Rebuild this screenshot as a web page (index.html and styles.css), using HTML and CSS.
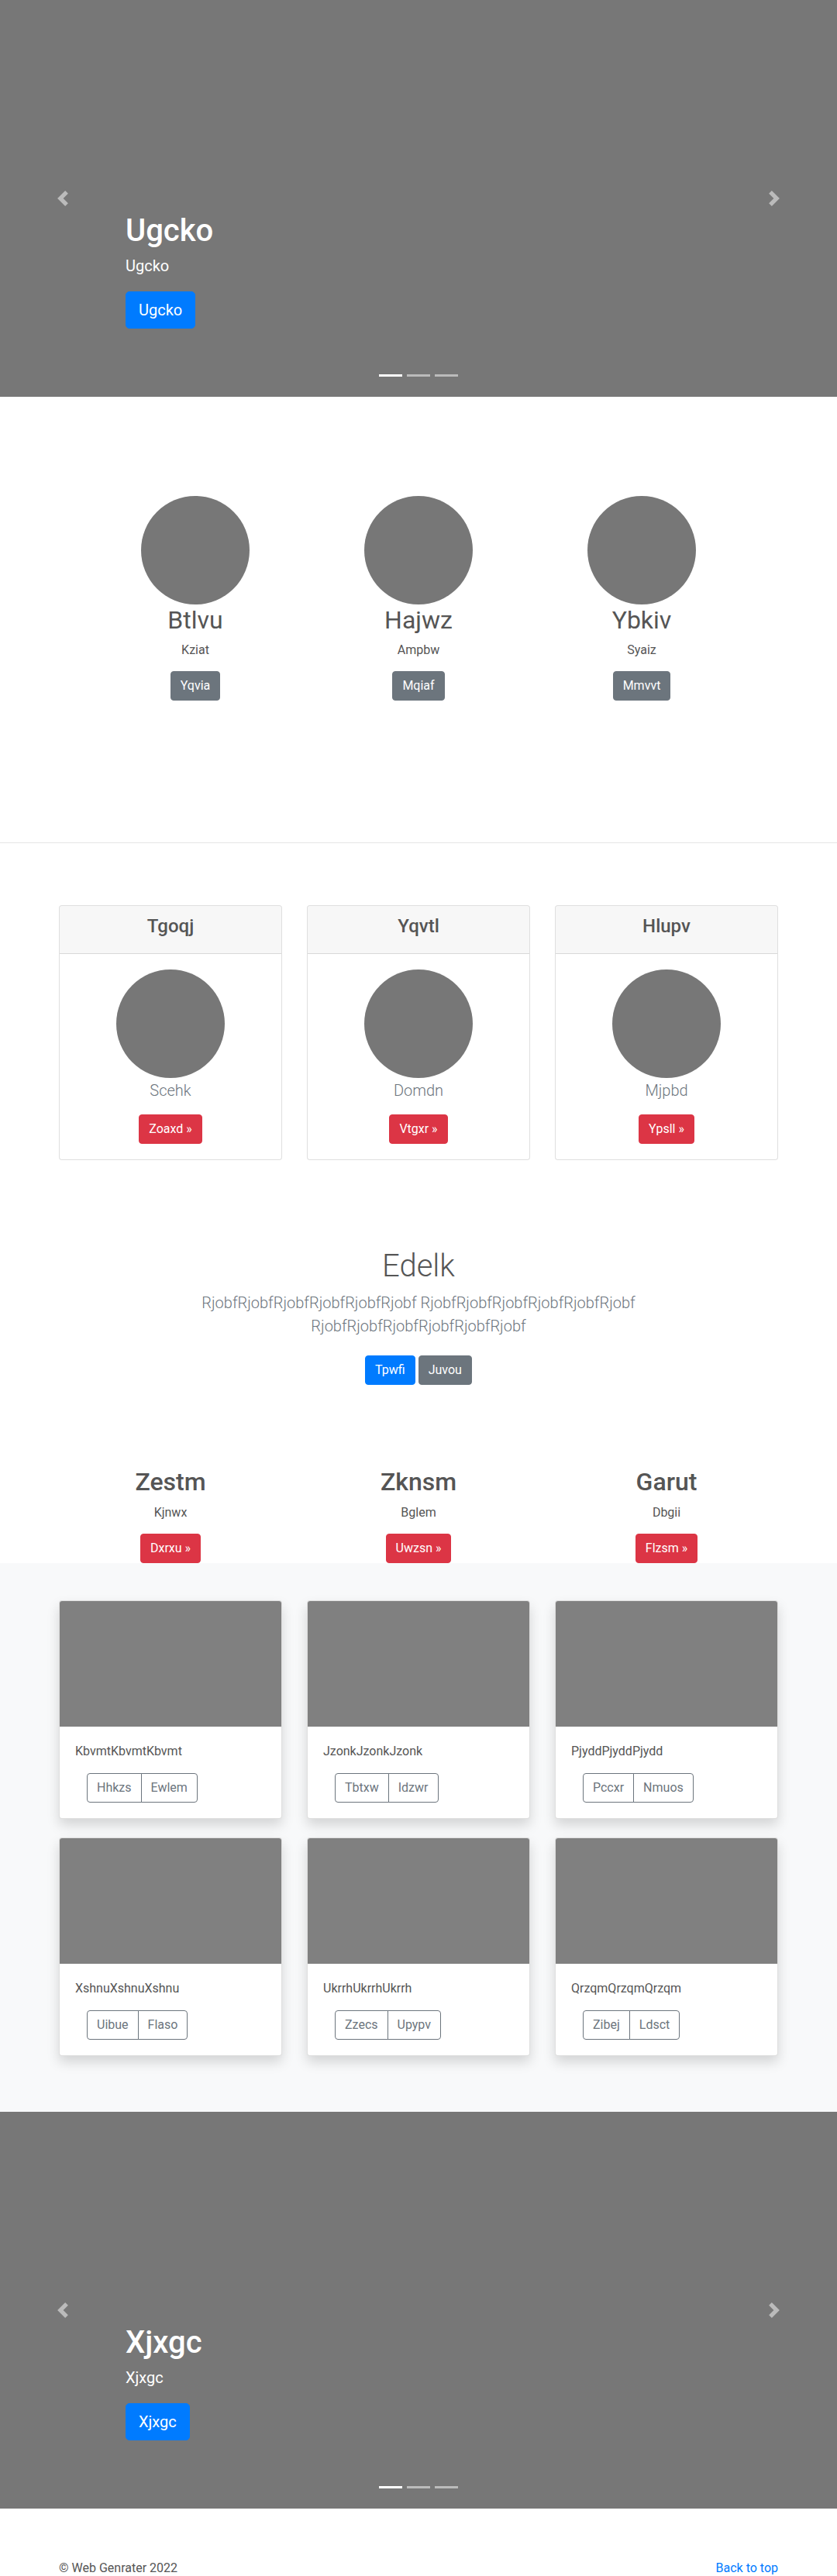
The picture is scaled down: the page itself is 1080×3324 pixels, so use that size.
FILE: index.html
```html
<!DOCTYPE html>
<html lang="en">
<head>
<meta charset="utf-8">
<title>Web Genrater</title>
<link rel="stylesheet" href="styles.css">
</head>
<body>

<div class="carousel">
  <div class="carousel-caption">
    <h1>Ugcko</h1>
    <p class="sub">Ugcko</p>
    <p class="cta"><a class="btn btn-lg btn-primary" href="#">Ugcko</a></p>
  </div>
  <ol class="carousel-indicators"><li class="active"></li><li></li><li></li></ol>
  <a class="carousel-control prev" href="#"><svg viewBox="0 0 8 8" fill="#fff"><path d="M5.25 0l-4 4 4 4 1.5-1.5L4.25 4l2.5-2.5L5.25 0z"/></svg></a>
  <a class="carousel-control next" href="#"><svg viewBox="0 0 8 8" fill="#fff"><path d="M2.75 0l-1.5 1.5L3.75 4l-2.5 2.5L2.75 8l4-4-4-4z"/></svg></a>
</div>

<section class="marketing">
  <div class="marketing-row">
    <div class="mk-col">
      <div class="circle"></div>
      <h2>Btlvu</h2>
      <p>Kziat</p>
      <a class="btn btn-secondary" href="#">Yqvia</a>
    </div>
    <div class="mk-col">
      <div class="circle"></div>
      <h2>Hajwz</h2>
      <p>Ampbw</p>
      <a class="btn btn-secondary" href="#">Mqiaf</a>
    </div>
    <div class="mk-col">
      <div class="circle"></div>
      <h2>Ybkiv</h2>
      <p>Syaiz</p>
      <a class="btn btn-secondary" href="#">Mmvvt</a>
    </div>
  </div>
</section>

<section class="pricing">
  <div class="grid3">
    <div class="pcard">
      <div class="pcard-header"><h4>Tgoqj</h4></div>
      <div class="pcard-body">
        <div class="circle"></div>
        <p class="lead-muted">Scehk</p>
        <a class="btn btn-danger" href="#">Zoaxd &raquo;</a>
      </div>
    </div>
    <div class="pcard">
      <div class="pcard-header"><h4>Yqvtl</h4></div>
      <div class="pcard-body">
        <div class="circle"></div>
        <p class="lead-muted">Domdn</p>
        <a class="btn btn-danger" href="#">Vtgxr &raquo;</a>
      </div>
    </div>
    <div class="pcard">
      <div class="pcard-header"><h4>Hlupv</h4></div>
      <div class="pcard-body">
        <div class="circle"></div>
        <p class="lead-muted">Mjpbd</p>
        <a class="btn btn-danger" href="#">Ypsll &raquo;</a>
      </div>
    </div>
  </div>
</section>

<section class="jumbo">
  <div class="jumbo-inner">
    <h1>Edelk</h1>
    <p class="lead">RjobfRjobfRjobfRjobfRjobfRjobf RjobfRjobfRjobfRjobfRjobfRjobf RjobfRjobfRjobfRjobfRjobfRjobf</p>
    <div class="actions">
      <a class="btn btn-primary" href="#">Tpwfi</a>
      <a class="btn btn-secondary" href="#">Juvou</a>
    </div>
  </div>
</section>

<section class="features">
  <div class="grid3">
    <div class="ft-col">
      <h2>Zestm</h2>
      <p>Kjnwx</p>
      <a class="btn btn-danger" href="#">Dxrxu &raquo;</a>
    </div>
    <div class="ft-col">
      <h2>Zknsm</h2>
      <p>Bglem</p>
      <a class="btn btn-danger" href="#">Uwzsn &raquo;</a>
    </div>
    <div class="ft-col">
      <h2>Garut</h2>
      <p>Dbgii</p>
      <a class="btn btn-danger" href="#">Flzsm &raquo;</a>
    </div>
  </div>
</section>

<section class="album">
  <div class="grid3">
    <div class="acard">
      <div class="acard-img"></div>
      <div class="acard-body">
        <p>KbvmtKbvmtKbvmt</p>
        <div class="btn-group"><a class="btn btn-outline" href="#">Hhkzs</a><a class="btn btn-outline" href="#">Ewlem</a></div>
      </div>
    </div>
    <div class="acard">
      <div class="acard-img"></div>
      <div class="acard-body">
        <p>JzonkJzonkJzonk</p>
        <div class="btn-group"><a class="btn btn-outline" href="#">Tbtxw</a><a class="btn btn-outline" href="#">Idzwr</a></div>
      </div>
    </div>
    <div class="acard">
      <div class="acard-img"></div>
      <div class="acard-body">
        <p>PjyddPjyddPjydd</p>
        <div class="btn-group"><a class="btn btn-outline" href="#">Pccxr</a><a class="btn btn-outline" href="#">Nmuos</a></div>
      </div>
    </div>
    <div class="acard">
      <div class="acard-img"></div>
      <div class="acard-body">
        <p>XshnuXshnuXshnu</p>
        <div class="btn-group"><a class="btn btn-outline" href="#">Uibue</a><a class="btn btn-outline" href="#">Flaso</a></div>
      </div>
    </div>
    <div class="acard">
      <div class="acard-img"></div>
      <div class="acard-body">
        <p>UkrrhUkrrhUkrrh</p>
        <div class="btn-group"><a class="btn btn-outline" href="#">Zzecs</a><a class="btn btn-outline" href="#">Upypv</a></div>
      </div>
    </div>
    <div class="acard">
      <div class="acard-img"></div>
      <div class="acard-body">
        <p>QrzqmQrzqmQrzqm</p>
        <div class="btn-group"><a class="btn btn-outline" href="#">Zibej</a><a class="btn btn-outline" href="#">Ldsct</a></div>
      </div>
    </div>
  </div>
</section>

<div class="carousel">
  <div class="carousel-caption">
    <h1>Xjxgc</h1>
    <p class="sub">Xjxgc</p>
    <p class="cta"><a class="btn btn-lg btn-primary" href="#">Xjxgc</a></p>
  </div>
  <ol class="carousel-indicators"><li class="active"></li><li></li><li></li></ol>
  <a class="carousel-control prev" href="#"><svg viewBox="0 0 8 8" fill="#fff"><path d="M5.25 0l-4 4 4 4 1.5-1.5L4.25 4l2.5-2.5L5.25 0z"/></svg></a>
  <a class="carousel-control next" href="#"><svg viewBox="0 0 8 8" fill="#fff"><path d="M2.75 0l-1.5 1.5L3.75 4l-2.5 2.5L2.75 8l4-4-4-4z"/></svg></a>
</div>

<footer class="footer">
  <p>&copy; Web Genrater 2022</p>
  <p><a href="#">Back to top</a></p>
</footer>

</body>
</html>
```

FILE: styles.css
```css
* { box-sizing: border-box; }

body {
  margin: 0;
  font-family: Roboto, "Liberation Sans", Arial, sans-serif;
  font-size: 16px;
  line-height: 1.5;
  color: #555;
  background: #fff;
}

h1, h2, h4, p { margin: 0; }
a { text-decoration: none; }

/* buttons */
.btn {
  display: inline-block;
  font-size: 16px;
  line-height: 24px;
  padding: 6px 12px;
  border: 1px solid transparent;
  border-radius: 4px;
  color: #fff;
  font-weight: 400;
}
.btn-lg { font-size: 20px; line-height: 30px; padding: 8px 16px; border-radius: 5px; }
.btn-primary { background: #007bff; border-color: #007bff; }
.btn-secondary { background: #6c757d; border-color: #6c757d; }
.btn-danger { background: #dc3545; border-color: #dc3545; }
.btn-outline { color: #6c757d; border-color: #6c757d; background: transparent; }

/* carousel */
.carousel {
  position: relative;
  height: 512px;
  background: #777;
  overflow: hidden;
}
.carousel-caption {
  position: absolute;
  left: 15%;
  right: 15%;
  bottom: 48px;
  padding: 20px 0;
  color: #fff;
  z-index: 10;
}
.carousel-caption h1 { font-size: 40px; line-height: 48px; font-weight: 500; margin-bottom: 6px; }
.carousel-caption .sub { font-size: 20px; line-height: 30px; margin-bottom: 18px; }
.carousel-caption .cta { display: flex; margin-bottom: 20px; }
.carousel-indicators {
  position: absolute;
  left: 15%;
  right: 15%;
  bottom: 0;
  margin: 0 0 16px;
  padding: 0;
  list-style: none;
  display: flex;
  justify-content: center;
  z-index: 15;
}
.carousel-indicators li {
  box-sizing: content-box;
  width: 30px;
  height: 3px;
  margin: 0 3px;
  background: #fff;
  background-clip: padding-box;
  border-top: 10px solid transparent;
  border-bottom: 10px solid transparent;
  opacity: .5;
}
.carousel-indicators li.active { opacity: 1; }
.carousel-control {
  position: absolute;
  top: 0;
  bottom: 0;
  width: 15%;
  display: flex;
  align-items: center;
  justify-content: center;
  opacity: .5;
}
.carousel-control.prev { left: 0; }
.carousel-control.next { right: 0; }
.carousel-control svg { width: 20px; height: 20px; display: block; }

/* marketing */
.marketing {
  padding: 128px 0 183px;
  border-bottom: 1px solid #e5e5e5;
}
.marketing-row {
  width: 864px;
  margin: 0 auto;
  display: grid;
  grid-template-columns: repeat(3, 1fr);
  text-align: center;
}
.circle {
  width: 140px;
  height: 140px;
  border-radius: 50%;
  background: #777;
  margin: 0 auto;
}
.marketing h2 { font-size: 32px; line-height: 38.4px; font-weight: 400; margin: 1px 0 8px; }
.marketing p { margin-bottom: 15px; }

/* shared 3-col grid */
.grid3 {
  width: 928px;
  margin: 0 auto;
  display: grid;
  grid-template-columns: repeat(3, 1fr);
  column-gap: 32px;
}

/* pricing cards */
.pricing { padding-top: 80px; }
.pcard {
  border: 1px solid rgba(0, 0, 0, .125);
  border-radius: 4px;
  text-align: center;
  background: #fff;
  overflow: hidden;
}
.pcard-header {
  background: rgba(0, 0, 0, .03);
  border-bottom: 1px solid rgba(0, 0, 0, .125);
  padding: 12px 20px;
}
.pcard-header h4 { font-size: 24px; line-height: 28.8px; font-weight: 500; margin-bottom: 8px; }
.pcard-body { padding: 20px; }
.lead-muted {
  font-size: 20px;
  line-height: 30px;
  font-weight: 300;
  color: #6c757d;
  margin: 1px 0 16px;
}

/* jumbotron */
.jumbo { padding-top: 113px; text-align: center; }
.jumbo-inner { max-width: 640px; margin: 0 auto; padding: 0 15px; }
.jumbo h1 { font-size: 40px; line-height: 48px; font-weight: 300; margin-bottom: 8px; color: #555; }
.jumbo .lead { font-size: 20px; line-height: 30px; font-weight: 300; color: #6c757d; margin-bottom: 23px; }
.jumbo .actions { display: flex; justify-content: center; gap: 4px; }

/* features */
.features { padding-top: 106px; text-align: center; }
.features h2 { font-size: 32px; line-height: 38.4px; font-weight: 500; margin-bottom: 8px; }
.features p { margin-bottom: 15px; }

/* album */
.album { background: #f8f9fa; padding: 48px 0; }
.acard {
  background: #fff;
  border: 1px solid rgba(0, 0, 0, .125);
  border-radius: 4px;
  box-shadow: 0 8px 16px rgba(0, 0, 0, .15);
  margin-bottom: 24px;
  overflow: hidden;
}
.acard-img { height: 162px; background: #808080; }
.acard-body { padding: 20px; }
.acard-body p { margin-bottom: 16px; }
.btn-group { display: inline-flex; margin-left: 15px; vertical-align: top; }
.btn-group .btn:first-child { border-top-right-radius: 0; border-bottom-right-radius: 0; }
.btn-group .btn + .btn { margin-left: -1px; border-top-left-radius: 0; border-bottom-left-radius: 0; }

/* footer */
.footer {
  width: 928px;
  margin: 0 auto;
  padding-top: 65px;
  display: flex;
  justify-content: space-between;
}
.footer a { color: #007bff; }
```
